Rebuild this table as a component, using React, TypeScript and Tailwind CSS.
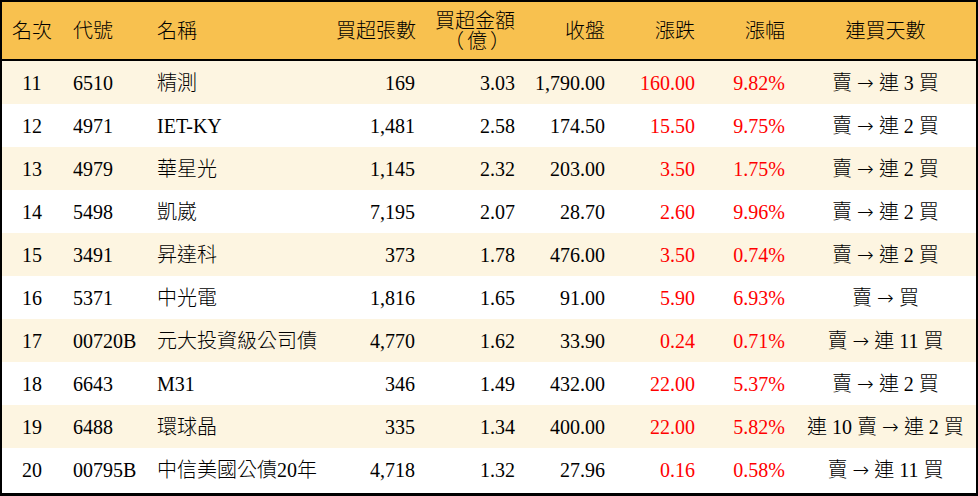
type Row = {
  rank: number;
  code: string;
  name: string;
  lots: string;
  amount: string;
  close: string;
  change: string;
  pct: string;
  streak: string;
};

const rows: Row[] = [
  { rank: 11, code: '6510', name: '精測', lots: '169', amount: '3.03', close: '1,790.00', change: '160.00', pct: '9.82%', streak: '賣 → 連 3 買' },
  { rank: 12, code: '4971', name: 'IET-KY', lots: '1,481', amount: '2.58', close: '174.50', change: '15.50', pct: '9.75%', streak: '賣 → 連 2 買' },
  { rank: 13, code: '4979', name: '華星光', lots: '1,145', amount: '2.32', close: '203.00', change: '3.50', pct: '1.75%', streak: '賣 → 連 2 買' },
  { rank: 14, code: '5498', name: '凱崴', lots: '7,195', amount: '2.07', close: '28.70', change: '2.60', pct: '9.96%', streak: '賣 → 連 2 買' },
  { rank: 15, code: '3491', name: '昇達科', lots: '373', amount: '1.78', close: '476.00', change: '3.50', pct: '0.74%', streak: '賣 → 連 2 買' },
  { rank: 16, code: '5371', name: '中光電', lots: '1,816', amount: '1.65', close: '91.00', change: '5.90', pct: '6.93%', streak: '賣 → 買' },
  { rank: 17, code: '00720B', name: '元大投資級公司債', lots: '4,770', amount: '1.62', close: '33.90', change: '0.24', pct: '0.71%', streak: '賣 → 連 11 買' },
  { rank: 18, code: '6643', name: 'M31', lots: '346', amount: '1.49', close: '432.00', change: '22.00', pct: '5.37%', streak: '賣 → 連 2 買' },
  { rank: 19, code: '6488', name: '環球晶', lots: '335', amount: '1.34', close: '400.00', change: '22.00', pct: '5.82%', streak: '連 10 賣 → 連 2 買' },
  { rank: 20, code: '00795B', name: '中信美國公債20年', lots: '4,718', amount: '1.32', close: '27.96', change: '0.16', pct: '0.58%', streak: '賣 → 連 11 買' },
];

const cols = 'grid grid-cols-[60px_84px_190px_89px_100px_90px_90px_90px_1fr]';

function Streak({ text }: { text: string }) {
  const [before, after] = text.split('→');
  return (
    <>
      {before}
      <span className="font-['DejaVu_Sans',sans-serif] font-light">→</span>
      {after}
    </>
  );
}

export default function App() {
  return (
    <div className="w-[978px] h-[496px] bg-white border-black border-t-2 border-x-2 border-b-[3px] font-['Liberation_Serif','Noto_Sans_CJK_TC',serif] font-light text-[20px] text-black">
      <div className={`${cols} h-[59px] bg-[#f8c14f] border-b-2 border-black items-center leading-5 whitespace-nowrap`}>
        <div className="text-center">名次</div>
        <div className="pl-[11px]">代號</div>
        <div className="pl-[11px]">名稱</div>
        <div className="text-right pr-[10px]">買超張數</div>
        <div className="text-right pr-[10px]">
          <div>買超金額</div>
          <div className="tracking-[3px] pr-[2px]">（億）</div>
        </div>
        <div className="text-right pr-[10px]">收盤</div>
        <div className="text-right pr-[10px]">漲跌</div>
        <div className="text-right pr-[10px]">漲幅</div>
        <div className="text-center">連買天數</div>
      </div>

      {rows.map((r, i) => (
        <div
          key={r.rank}
          className={`${cols} h-[43px] items-center whitespace-pre ${i % 2 === 0 ? 'bg-[#fdf5e1]' : 'bg-white'}`}
        >
          <div className="text-center">{r.rank}</div>
          <div className="pl-[11px]">{r.code}</div>
          <div className="pl-[11px]">{r.name}</div>
          <div className="text-right pr-[10px]">{r.lots}</div>
          <div className="text-right pr-[10px]">{r.amount}</div>
          <div className="text-right pr-[10px]">{r.close}</div>
          <div className="text-right pr-[10px] text-[#ff0000]">{r.change}</div>
          <div className="text-right pr-[10px] text-[#ff0000]">{r.pct}</div>
          <div className="text-center">
            <Streak text={r.streak} />
          </div>
        </div>
      ))}
    </div>
  );
}
